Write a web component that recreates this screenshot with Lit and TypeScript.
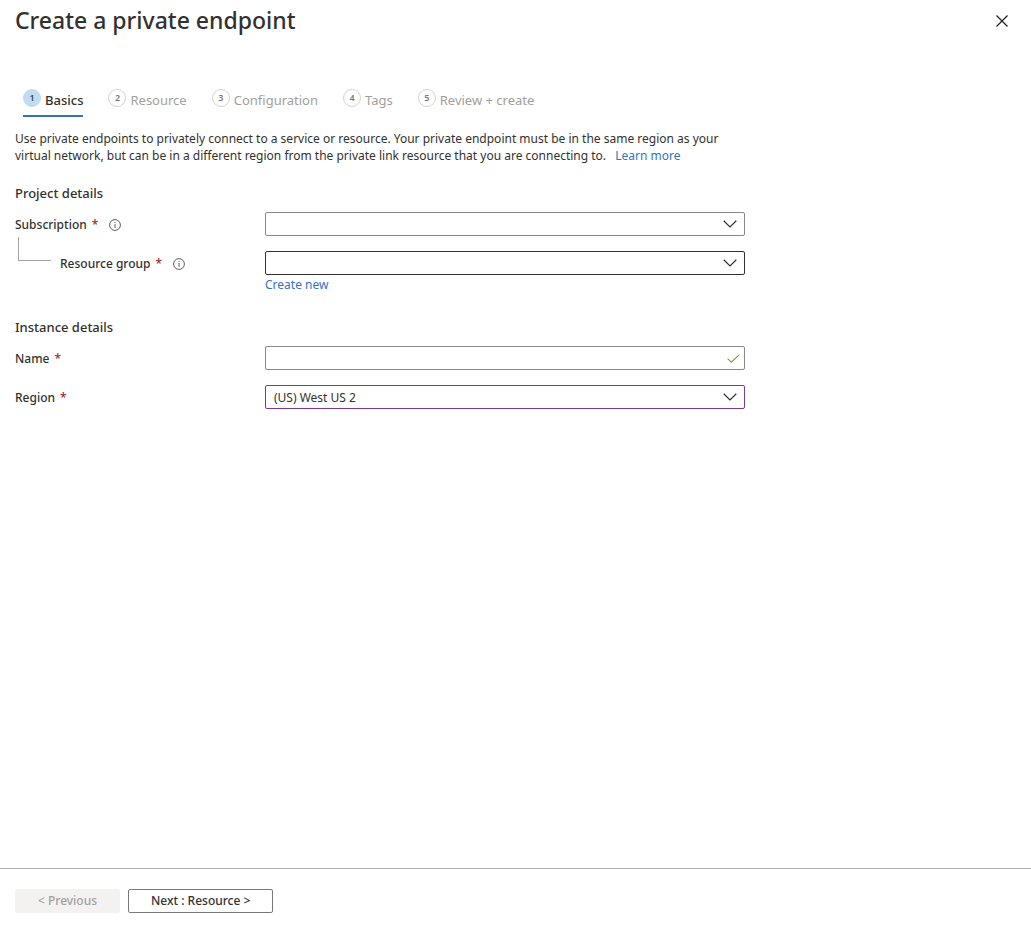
import { LitElement, html, css, nothing } from "lit";
import { customElement, state } from "lit/decorators.js";

const STEPS = ["Basics", "Resource", "Configuration", "Tags", "Review + create"];

@customElement("app-root")
export class AppRoot extends LitElement {
  @state() private current = 0;

  static styles = css`
    :host {
      display: flex;
      flex-direction: column;
      min-height: 100vh;
      background: #fff;
      color: #323130;
      font: 12px/17px "Noto Sans", "Open Sans", sans-serif;
    }
    * {
      box-sizing: border-box;
    }
    header {
      display: flex;
      justify-content: space-between;
      align-items: center;
      height: 42px;
      padding: 0 17px 0 15px;
    }
    h1 {
      margin: 0;
      padding-bottom: 2px;
      font-size: 23px;
      line-height: 32px;
      font-weight: 500;
    }
    .close {
      display: flex;
      padding: 6px;
      border: 0;
      background: none;
      color: #201f1e;
    }
    main {
      flex: 1;
      padding: 47px 15px 0;
    }
    .steps {
      display: flex;
      gap: 25px;
      margin: 0 8px;
      padding: 0;
      list-style: none;
    }
    .step {
      display: flex;
      gap: 4px;
      height: 28px;
      padding: 0;
      border: 0;
      border-bottom: 2px solid transparent;
      background: none;
      font: inherit;
      font-size: 13px;
      line-height: 22px;
      color: #a19f9d;
      white-space: nowrap;
    }
    .num {
      width: 18px;
      height: 18px;
      border: 1px solid #d6d4d2;
      border-radius: 50%;
      font-size: 9px;
      line-height: 16px;
      font-weight: 600;
      text-align: center;
      color: #7a7876;
    }
    .step.active {
      border-bottom-color: #3572b0;
      color: #323130;
      font-weight: 500;
    }
    .active .num {
      border-color: #c0dcf3;
      background: #c0dcf3;
      color: #2b4a6b;
    }
    .intro {
      max-width: 730px;
      margin: 13px 0 0;
    }
    a {
      color: #3a6fc0;
      text-decoration: none;
    }
    .intro a {
      display: inline-block;
      margin-left: 6px;
    }
    h2 {
      margin: 0 0 10px;
      font-size: 13px;
      line-height: 18px;
      font-weight: 500;
    }
    section {
      margin-top: 20px;
      max-width: 730px;
    }
    section + section {
      margin-top: 25px;
    }
    .row {
      display: grid;
      grid-template-columns: 250px 1fr;
      margin-bottom: 15px;
    }
    .label {
      position: relative;
      display: flex;
      align-items: center;
      height: 24px;
      font-weight: 500;
    }
    .req {
      margin-left: 5px;
      color: #a4262c;
    }
    .info {
      margin: 2px 0 0 11px;
    }
    .child {
      padding-left: 45px;
    }
    .elbow {
      position: absolute;
      left: 3px;
      top: -14px;
      width: 33px;
      height: 24px;
      border: solid #a6a4a2;
      border-width: 0 0 1px 1px;
    }
    .box {
      display: grid;
      align-items: center;
    }
    .box > * {
      grid-area: 1 / 1;
    }
    select,
    input {
      appearance: none;
      width: 100%;
      height: 24px;
      margin: 0;
      padding: 0 30px 0 8px;
      border: 1px solid #8a8886;
      border-radius: 2px;
      background: #fff;
      color: #323130;
      font: inherit;
      outline: 0;
    }
    .dark {
      border-color: #323130;
    }
    .edited {
      border-color: #7a3a96;
    }
    .mark {
      justify-self: end;
      margin-right: 8px;
      pointer-events: none;
    }
    .tick {
      margin-right: 5px;
      color: #7aa83a;
    }
    .under {
      display: block;
      width: max-content;
      margin-top: 1px;
    }
    footer {
      display: flex;
      gap: 8px;
      padding: 20px 15px 16px;
      border-top: 1px solid #b3b1af;
    }
    footer button {
      height: 24px;
      padding: 0 22px;
      border: 1px solid #7a7876;
      border-radius: 2px;
      background: #fff;
      color: #323130;
      font: inherit;
      font-weight: 500;
      line-height: 20px;
    }
    footer button:disabled {
      border-color: #f3f2f1;
      background: #f3f2f1;
      color: #a19f9d;
    }
    svg {
      display: block;
      fill: none;
      stroke: currentColor;
    }
  `;

  private info(about: string) {
    return html`<svg class="info" width="12" height="12" viewBox="0 0 12 12" role="img" aria-label=${about}>
      <circle cx="6" cy="6" r="5.4" stroke="#605e5c" />
      <path d="M6 5v4M6 3v1" stroke="#605e5c" />
    </svg>`;
  }

  private label(id: string, text: string, info = "", child = false) {
    return html`<div class="label ${child ? "child" : ""}">
      ${child ? html`<span class="elbow"></span>` : nothing}
      <label for=${id}>${text}<span class="req">*</span></label>
      ${info ? this.info(info) : nothing}
    </div>`;
  }

  private select(id: string, cls: string, value: string) {
    return html`<div class="box">
      <select id=${id} class=${cls} required>
        <option>${value}</option>
      </select>
      <svg class="mark" width="14" height="8" viewBox="0 0 14 8" stroke-width="1.2" aria-hidden="true">
        <path d="M.7 .8 7 7 13.3 .8" />
      </svg>
    </div>`;
  }

  render() {
    return html`
      <header>
        <h1>Create a private endpoint</h1>
        <button class="close" aria-label="Close">
          <svg width="12" height="12" viewBox="0 0 12 12" stroke-width="1.2"><path d="M.5 .5l11 11M11.5 .5l-11 11" /></svg>
        </button>
      </header>
      <main>
        <ol class="steps">
          ${STEPS.map(
            (name, i) => html`<li>
              <button class="step ${i === this.current ? "active" : ""}" @click=${() => (this.current = i)}>
                <span class="num">${i + 1}</span><span>${name}</span>
              </button>
            </li>`
          )}
        </ol>
        <p class="intro">
          <span>Use private endpoints to privately connect to a service or resource. Your private endpoint must be in
            the same region as your virtual network, but can be in a different region from the private link resource
            that you are connecting to.</span>
          <a href="#">Learn more</a>
        </p>
        <section>
          <h2>Project details</h2>
          <div class="row">${this.label("sub", "Subscription", "About subscriptions")}${this.select("sub", "", "")}</div>
          <div class="row">
            ${this.label("group", "Resource group", "About resource groups", true)}
            <div>${this.select("group", "dark", "")}<a class="under" href="#">Create new</a></div>
          </div>
        </section>
        <section>
          <h2>Instance details</h2>
          <div class="row">
            ${this.label("name", "Name")}
            <div class="box">
              <input id="name" type="text" required />
              <svg class="mark tick" width="13" height="9" viewBox="0 0 13 9" stroke-width="1.2" aria-hidden="true">
                <path d="M.6 4.6 4.3 8.2 12.4 .6" />
              </svg>
            </div>
          </div>
          <div class="row">${this.label("region", "Region")}${this.select("region", "edited", "(US) West US 2")}</div>
        </section>
      </main>
      <footer>
        <button ?disabled=${this.current === 0}>&lt; Previous</button>
        <button>Next : Resource &gt;</button>
      </footer>
    `;
  }
}
